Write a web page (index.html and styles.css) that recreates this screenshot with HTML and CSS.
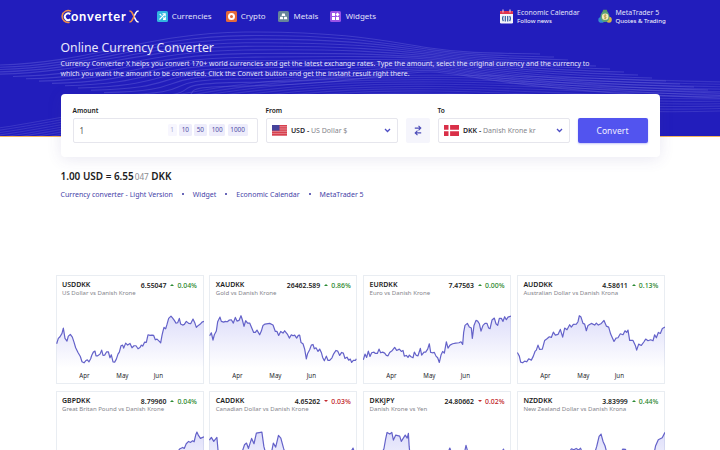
FILE: index.html
```html
<!DOCTYPE html>
<html lang="en">
<head>
<meta charset="utf-8">
<title>Online Currency Converter</title>
<link rel="stylesheet" href="styles.css">
</head>
<body>
<header class="hero">
  <svg class="waves" id="waves" viewBox="0 0 720 136" width="720" height="136"></svg>
  <div class="wrap">
    <nav class="nav">
      <a class="logo">
        <svg class="logo-c" viewBox="0 0 14 15" width="14" height="15"><path d="M11.2 2.3A6 6 0 1 0 9.6 13.3" fill="none" stroke="#ee8d4a" stroke-width="1.5"/><path d="M10.3 5.2A3.3 3.3 0 1 0 10.3 10.2" fill="none" stroke="#fff" stroke-width="1.9"/></svg>
        <span class="logo-text">onverter</span>
        <svg viewBox="0 0 10 13" width="10" height="13"><path d="M9.6 1Q7.8 1 7 2.6L5 6.5L7 10.4Q7.8 12 9.6 12" fill="none" stroke="#fff" stroke-width="1.5"/><path d="M.4 1Q2.2 1 3 2.6L5 6.5L3 10.4Q2.2 12 .4 12" fill="none" stroke="#ee8d4a" stroke-width="1.6"/></svg>
      </a>
      <a class="item i1"><svg viewBox="0 0 11 11" width="11" height="11"><rect width="11" height="11" rx="1.5" fill="#32b5df"/><path d="M2.5 8.5L8 3M5.4 2.8H8.2V5.6M2.7 3L4.5 4.7M6.3 6.5L8.2 8.3M8.3 6V8.4H6" fill="none" stroke="#fff" stroke-width="1.1"/></svg>Currencies</a>
      <a class="item i2"><svg viewBox="0 0 11 11" width="11" height="11"><rect width="11" height="11" rx="1.5" fill="#e2693b"/><circle cx="5.5" cy="5.5" r="2.5" fill="none" stroke="#fff" stroke-width="2"/></svg>Crypto</a>
      <a class="item i3"><svg viewBox="0 0 11 11" width="11" height="11"><rect width="11" height="11" rx="1.5" fill="#668499"/><path d="M4.1 2.6H6.8L7.3 5.1H3.6ZM2.2 5.8H4.8L5.2 8.3H1.7ZM6.2 5.8H8.8L9.3 8.3H5.8Z" fill="#fff"/></svg>Metals</a>
      <a class="item i4"><svg viewBox="0 0 11 11" width="11" height="11"><rect width="11" height="11" rx="1.5" fill="#9a52e6"/><path d="M2 2H5V5H2ZM2 6H5V9H2ZM6 6H9V9H6ZM7.5 1.5L9.5 3.5L7.5 5.5L5.5 3.5Z" fill="#fff"/></svg>Widgets</a>
      <a class="promo p1">
        <svg viewBox="0 0 13 15" width="13" height="15"><rect y="2" width="13" height="12.5" rx="1.2" fill="#f5f4fa"/><path d="M0 5V3Q0 2 1 2H12Q13 2 13 3V5Z" fill="#e0364f"/><path d="M3 .5V3.5M10 .5V3.5" stroke="#e9c5dc" stroke-width="1.2"/><path d="M3.4 7.2Q1.8 9.5 3.4 12.1M9.6 7.2Q11.2 9.5 9.6 12.1M5.3 7V12.5M7.7 7V12.5" fill="none" stroke="#315b9e" stroke-width="1.2"/></svg>
        <span><b>Economic Calendar</b><small>Follow news</small></span>
      </a>
      <a class="promo p2">
        <svg viewBox="0 0 14 15" width="14" height="15"><path d="M4 4L5.2.7H8.8L10 4Z" fill="#5b9b62"/><ellipse cx="3.5" cy="10.9" rx="3.2" ry="2.8" fill="#368dce"/><ellipse cx="11" cy="10.7" rx="2.8" ry="3" fill="#d3b646"/><ellipse cx="7" cy="7.6" rx="4.5" ry="5.4" fill="#59a179"/><circle cx="7.2" cy="7.8" r="3.3" fill="#f3edb9"/><path d="M8.4 6.4Q6.2 5.4 6.1 6.8T8.2 8.3Q8.2 10 6 9.2M7.2 5.1V10.5" fill="none" stroke="#b2943c" stroke-width=".7"/></svg>
        <span><b>MetaTrader 5</b><small>Quotes &amp; Trading</small></span>
      </a>
    </nav>
    <h1>Online Currency Converter</h1>
    <p class="intro">Currency Converter X helps you convert 170+ world currencies and get the latest exchange rates. Type the amount, select the original currency and the currency to<br>which you want the amount to be converted. Click the Convert button and get the instant result right there.</p>
  </div>
</header>
<main class="wrap">
  <form class="panel">
    <div class="field"><label>Amount</label>
      <div class="box amount"><span class="value">1</span><span class="chip dim">1</span><span class="chip">10</span><span class="chip">50</span><span class="chip">100</span><span class="chip">1000</span></div>
    </div>
    <div class="field"><label>From</label>
      <div class="box select">
        <svg viewBox="0 0 15 11" width="15" height="11"><rect width="15" height="11" fill="#e58a94"/><path d="M0 .7H15M0 2.9H15M0 5.1H15M0 7.3H15M0 9.5H15" stroke="#d8404d" stroke-width="1.3"/><rect width="7.5" height="5.6" fill="#46439b"/></svg>
        <span class="cur"><b>USD -</b> US Dollar $</span>
        <svg class="chev" viewBox="0 0 7 5" width="7" height="5"><path d="M1 1L3.5 3.5L6 1" fill="none" stroke="#4d4dc4" stroke-width="1.3"/></svg>
      </div>
    </div>
    <div class="swap"><svg viewBox="0 0 8 11" width="8" height="11"><path d="M.8 3.1H6.7M4.5.8L6.8 3.1L4.5 5.3M7.2 7.9H1.3M3.5 5.7L1.2 7.9L3.5 10.2" fill="none" stroke="#4b4bb8" stroke-width="1.1"/></svg></div>
    <div class="field"><label>To</label>
      <div class="box select">
        <svg viewBox="0 0 15 11" width="15" height="11"><rect width="15" height="11" fill="#d92f48"/><path d="M5.3 0V11M0 5.5H15" stroke="#fff" stroke-width="1.6"/></svg>
        <span class="cur"><b>DKK -</b> Danish Krone kr</span>
        <svg class="chev" viewBox="0 0 7 5" width="7" height="5"><path d="M1 1L3.5 3.5L6 1" fill="none" stroke="#4d4dc4" stroke-width="1.3"/></svg>
      </div>
    </div>
    <button class="convert" type="button">Convert</button>
  </form>
  <div class="result">1.00 USD = 6.55<span>047</span> DKK</div>
  <div class="links"><a>Currency converter - Light Version</a><i></i><a>Widget</a><i></i><a>Economic Calendar</a><i></i><a>MetaTrader 5</a></div>
</main>
<section class="cards" id="cards"></section>
<script src="script.js"></script>
</body>
</html>
```
FILE: styles.css
```css
* { box-sizing: border-box; }
body { margin: 0; width: 720px; height: 450px; overflow: hidden; background: #fff; color: #1c1c22; font-family: "Noto Sans", "Open Sans", sans-serif; }
.hero { position: relative; height: 137px; background: #221dbc; border-bottom: 1.5px solid #f5b55c; }
.waves { position: absolute; left: 0; top: 0; }
.waves path { fill: none; stroke: #6f6cdc; stroke-width: 1.1; }
.wrap { position: relative; width: 599px; margin: 0 0 0 60.5px; }
.nav { display: flex; height: 32px; color: #e3e2f8; }
.nav > * { flex: none; }
.logo { display: flex; align-items: center; width: 96px; height: 32px; }
.logo svg { flex: none; }
.logo-c { margin: 0 -2.6px 0 -1px; }
.logo-text { flex: none; width: 58px; font: 700 12.8px/16px Lato, sans-serif; letter-spacing: .85px; color: #fff; margin-top: -1px; }
.item { display: flex; align-items: center; gap: 4.2px; font-size: 7.95px; height: 32px; white-space: nowrap; }
.i1 { width: 69px; }
.i2 { width: 52.8px; }
.i3 { width: 52.2px; }
.i4 { width: 169.6px; }
.promo { display: flex; gap: 4px; padding-top: 8.5px; white-space: nowrap; }
.p1 { width: 97.5px; }
.promo b, .promo small { display: block; font-weight: 400; }
.promo b { font-size: 6.95px; line-height: 9px; margin-top: -1px; }
.promo small { font-size: 6.1px; line-height: 8.5px; color: #fff; }
h1 { margin: 6px 0 0; height: 18px; font-size: 12.25px; line-height: 19px; font-weight: 400; color: #e9e8fb; }
.intro { margin: 3px 0 0; font-size: 6.945px; line-height: 9.5px; color: #e6e5fa; white-space: nowrap; }
.panel { display: grid; grid-template-columns: 185px 132px 24px 132px 70px; column-gap: 8px; align-items: end; height: 62.5px; margin-top: -43px; padding: 0 12px 14px; background: #fff; border-radius: 4px; box-shadow: 0 2px 15px rgba(70, 65, 150, .12); }
label { display: block; font-size: 6.6px; font-weight: 600; line-height: 10px; margin-bottom: 2px; }
.box { display: flex; align-items: center; height: 24.5px; border: 1px solid #e6e6ed; border-radius: 2px; }
.amount { padding: 0 9px 0 6px; gap: 2.5px; }
.value { flex: 1; font-size: 8px; color: #555; }
.chip { height: 12px; padding: 0 2.6px; font-size: 6.4px; line-height: 12px; color: #4f4ba6; background: #eeedfb; border-radius: 1.5px; }
.dim { color: #aaa7d2; background: #f7f6fe; }
.select { padding: 0 6px 0 5.4px; }
.cur { flex: 1; margin-left: 4px; font-size: 7px; color: #85858c; white-space: nowrap; }
.cur b { font-weight: 600; color: #25252b; }
.swap { display: flex; align-items: center; justify-content: center; height: 24.5px; background: #f5f5fc; border-radius: 2px; }
.convert { height: 24.5px; padding: 0; border: 0; border-radius: 2px; background: #5254ef; color: #f2f2ff; font: 8.5px "Noto Sans", sans-serif; letter-spacing: .1px; box-shadow: 0 1px 2px rgba(82, 84, 239, .35); }
.result { margin-top: 12.5px; height: 14px; font-size: 9.95px; line-height: 14px; font-weight: 600; }
.result span { font-size: 8.2px; font-weight: 400; color: #8b8b8f; margin-left: 1px; }
.links { display: flex; align-items: center; height: 10px; margin-top: 5.5px; font-size: 7.02px; color: #4542a8; white-space: nowrap; }
.links i { width: 2px; height: 2px; margin: 1px 9px 0; border-radius: 50%; background: #3734a0; }
.cards { display: grid; grid-template-columns: repeat(4, 148px); grid-auto-rows: 109.5px; align-content: start; column-gap: 5.8px; row-gap: 6.5px; width: 610px; height: 175.5px; overflow: hidden; margin: 76px 0 0 55.5px; }
.card { position: relative; border: 1px solid #e9edf2; background: #fff; }
.head { position: relative; display: flex; justify-content: space-between; padding: 4px 5.5px 0 5.5px; white-space: nowrap; }
.names { width: 60px; }
.pair { font-size: 7px; font-weight: 600; line-height: 9px; }
.desc { font-size: 6.05px; line-height: 8px; color: #85858c; }
.rate { display: flex; font-size: 6.9px; line-height: 11px; font-weight: 600; }
.change { display: flex; align-items: center; height: 11px; margin-left: 4px; font-weight: 500; color: #1f8529; }
.change::before { content: ""; margin-right: 3px; border: 2px solid transparent; border-top: 0; border-bottom: 2px solid #2c8b35; }
.change.down { color: #c0181e; }
.change.down::before { border-top: 2px solid #c42b30; border-bottom: 0; }
.chart { position: absolute; left: -1px; top: -1px; overflow: hidden; }
.line { fill: none; stroke: #6462c9; stroke-linejoin: round; stroke-width: 1.2px; vector-effect: non-scaling-stroke; }
.area { fill: url(#fade); }
.months text { font-size: 18.5px; fill: #25252b; }
```
FILE: script.js
```js
const waves = document.getElementById('waves');
const addWave = (d, opacity) => {
  const p = document.createElementNS('http://www.w3.org/2000/svg', 'path');
  p.setAttribute('d', d);
  p.setAttribute('opacity', opacity);
  waves.appendChild(p);
};
for (let i = 0; i < 16; i++) {
  const x0 = i < 5 ? -2 : (i - 4) * 13;
  const y0 = 65 + i * 2.3;
  const x1 = 540 + i * 14;
  const y1 = 54 + i * 3;
  addWave(`M${x0} ${y0}C${x0 + 95} ${y0 - 2} 145 ${33 + i * 3.6} 245 ${32 + i * 3.6}S390 ${42 + i * 2} 430 ${48 + i * 1.6}S500 ${53 + i * 2.6} ${x1} ${y1}`, 0.4);
}
for (let i = 0; i < 13; i++) {
  const y0 = 128 + i * 2.4;
  addWave(`M-2 ${y0}C110 ${y0 - 16} 200 ${82 + i * 3} 330 ${77 + i * 2.4}S560 ${78 + i * 3.2} 725 ${82 + i * 2.4}`, 0.3);
}

const months = [[86, 'Apr'], [197, 'May'], [309, 'Jun']];
const cards = [
  { pair: 'USDDKK', desc: 'US Dollar vs Danish Krone', rate: '6.55047', change: '0.04%', box: [16, 15, 444, 328],
    pts: '18,221 23,205 28,200 34,190 38,174 43,205 49,213 53,198 59,193 65,201 70,216 75,233 82,247 89,259 94,275 100,278 105,272 110,269 115,275 120,266 123,256 128,246 133,243 136,257 141,257 148,252 153,240 157,256 162,255 168,245 173,245 178,263 182,254 187,275 192,276 197,267 202,252 206,246 211,227 216,225 219,234 225,219 231,225 238,220 244,233 250,227 256,227 262,236 268,232 272,225 276,228 282,216 287,217 292,194 298,196 304,195 309,196 314,209 319,207 326,214 330,218 334,196 337,183 340,172 345,176 349,163 354,145 361,138 366,144 371,151 376,159 381,158 386,145 390,162 396,165 401,163 407,154 414,160 420,161 427,147 432,157 437,172 443,166 449,162 454,156 460,154' },
  { pair: 'XAUDKK', desc: 'Gold vs Danish Krone', rate: '26462.589', change: '0.86%', box: [13, 15, 444, 328],
    pts: '15,197 20,188 25,210 29,194 35,183 39,155 46,141 50,154 57,156 62,154 68,155 74,150 80,149 86,159 92,142 97,153 103,151 109,137 113,149 118,169 123,152 129,159 135,159 141,173 147,187 152,187 157,180 165,194 170,183 175,166 181,162 195,160 205,165 212,184 217,184 222,196 228,184 235,189 240,182 248,192 254,204 260,194 265,197 270,195 276,204 281,196 285,195 289,217 295,221 300,237 305,266 309,250 315,239 320,225 325,223 329,236 334,233 340,244 345,237 350,247 354,262 359,272 365,258 370,271 375,271 382,263 387,251 394,241 399,243 405,256 411,247 416,249 421,265 427,261 432,270 437,267 441,277 446,271 452,271 455,266' },
  { pair: 'EURDKK', desc: 'Euro vs Danish Krone', rate: '7.47563', change: '0.00%', box: [15, 15, 444, 328],
    pts: '16,269 21,252 26,262 31,243 36,259 41,248 48,246 52,250 58,250 63,237 68,248 74,246 80,249 85,256 90,257 95,247 103,241 110,232 116,241 124,237 130,244 135,241 139,258 145,256 150,262 154,255 159,260 165,263 169,246 175,256 180,257 187,235 191,255 198,246 203,246 209,237 214,221 218,247 223,248 229,247 234,258 239,263 244,277 249,255 254,244 259,249 265,215 270,234 276,225 284,221 293,219 303,218 309,215 314,223 317,187 321,166 328,160 334,171 340,174 343,205 348,166 354,151 359,153 364,161 369,183 375,166 381,160 387,160 392,174 396,176 402,150 409,144 414,161 419,166 424,145 430,145 435,154 440,140 445,149 450,141 459,138' },
  { pair: 'AUDDKK', desc: 'Australian Dollar vs Danish Krona', rate: '4.58611', change: '0.13%', box: [477, 15, 444, 328],
    pts: '478,247 484,258 488,276 494,278 500,273 506,275 512,266 520,270 526,258 531,244 535,240 540,225 545,238 553,237 560,211 567,206 574,200 580,202 586,186 592,195 600,193 607,178 614,201 620,174 627,179 635,164 640,171 646,163 655,162 660,155 664,137 669,141 675,160 680,162 685,182 690,166 700,160 710,165 715,159 721,165 730,160 738,151 745,168 752,171 758,192 768,214 774,204 780,203 787,191 795,194 801,182 806,187 810,180 815,211 825,211 832,226 836,240 842,222 850,226 858,215 863,207 870,212 878,209 885,212 890,194 895,203 901,187 907,190 913,175 921,171' },
  { pair: 'GBPDKK', desc: 'Great Britan Pound vs Danish Krone', rate: '8.79960', change: '0.04%', box: [13, 19, 375, 328],
    pts: '310,225 318,208 326,193 334,188 338,191 343,177 349,170 354,173 359,168 363,171 367,151 370,142 374,152 379,161 388,156' },
  { pair: 'CADDKK', desc: 'Canadian Dollar vs Danish Krone', rate: '4.65262', change: '0.03%', down: true, box: [403, 19, 375, 328],
    pts: '404,166 409,158 415,170 423,158 427,212 484,212 493,180 498,175 503,191 511,161 517,177 523,145 537,142 542,185 548,212 560,212 566,175 572,187 579,152 585,160 592,191 598,212 745,212 762,202 768,190 772,205 778,210' },
  { pair: 'DKKJPY', desc: 'Danish Krone vs Yen', rate: '24.80662', change: '0.02%', down: true, box: [792, 19, 375, 328],
    pts: '830,230 845,192 849,165 853,143 860,148 865,143 869,166 875,151 885,154 889,170 899,151 904,160 907,146 909,185 912,220 1002,220 1012,190 1020,215 1047,215 1053,182 1060,212 1138,212 1148,193 1155,215' },
  { pair: 'NZDDKK', desc: 'New Zealand Dollar vs Danish Krona', rate: '3.83999', change: '0.44%', box: [1180, 19, 375, 328],
    pts: '1300,225 1318,192 1324,195 1330,191 1336,196 1341,190 1348,212 1375,212 1382,185 1388,155 1393,148 1398,170 1403,183 1410,215 1438,215 1448,193 1455,194 1462,220 1525,220 1531,184 1538,165 1548,159 1555,143' }
];

document.getElementById('cards').innerHTML = cards.map((c, i) => {
  const [x, y, w, h] = c.box;
  const pts = c.pts.split(' ');
  const floor = y + h * 0.85;
  const area = `M${pts[0].split(',')[0]},${floor}L${pts.join('L')}L${pts.at(-1).split(',')[0]},${floor}Z`;
  const labels = i < 4 ? months.map(([mx, m]) => `<text x="${mx - 16 + x}" y="325">${m}</text>`).join('') : '';
  const gradient = i === 0 ? '<defs><linearGradient id="fade" x1="0" y1="0" x2="0" y2="1"><stop stop-color="#5a5ae6" stop-opacity=".2"/><stop offset="1" stop-color="#5a5ae6" stop-opacity="0"/></linearGradient></defs>' : '';
  return `<article class="card">
    <svg class="chart" viewBox="${x} ${y} ${w} ${h}" width="148" height="109.5" preserveAspectRatio="none">${gradient}
      <path class="area" d="${area}"/><path class="line" d="M${pts.join('L')}"/><g class="months">${labels}</g></svg>
    <div class="head"><div class="names"><div class="pair">${c.pair}</div><div class="desc">${c.desc}</div></div>
    <div class="rate">${c.rate}<span class="change${c.down ? ' down' : ''}">${c.change}</span></div></div>
  </article>`;
}).join('');
```
